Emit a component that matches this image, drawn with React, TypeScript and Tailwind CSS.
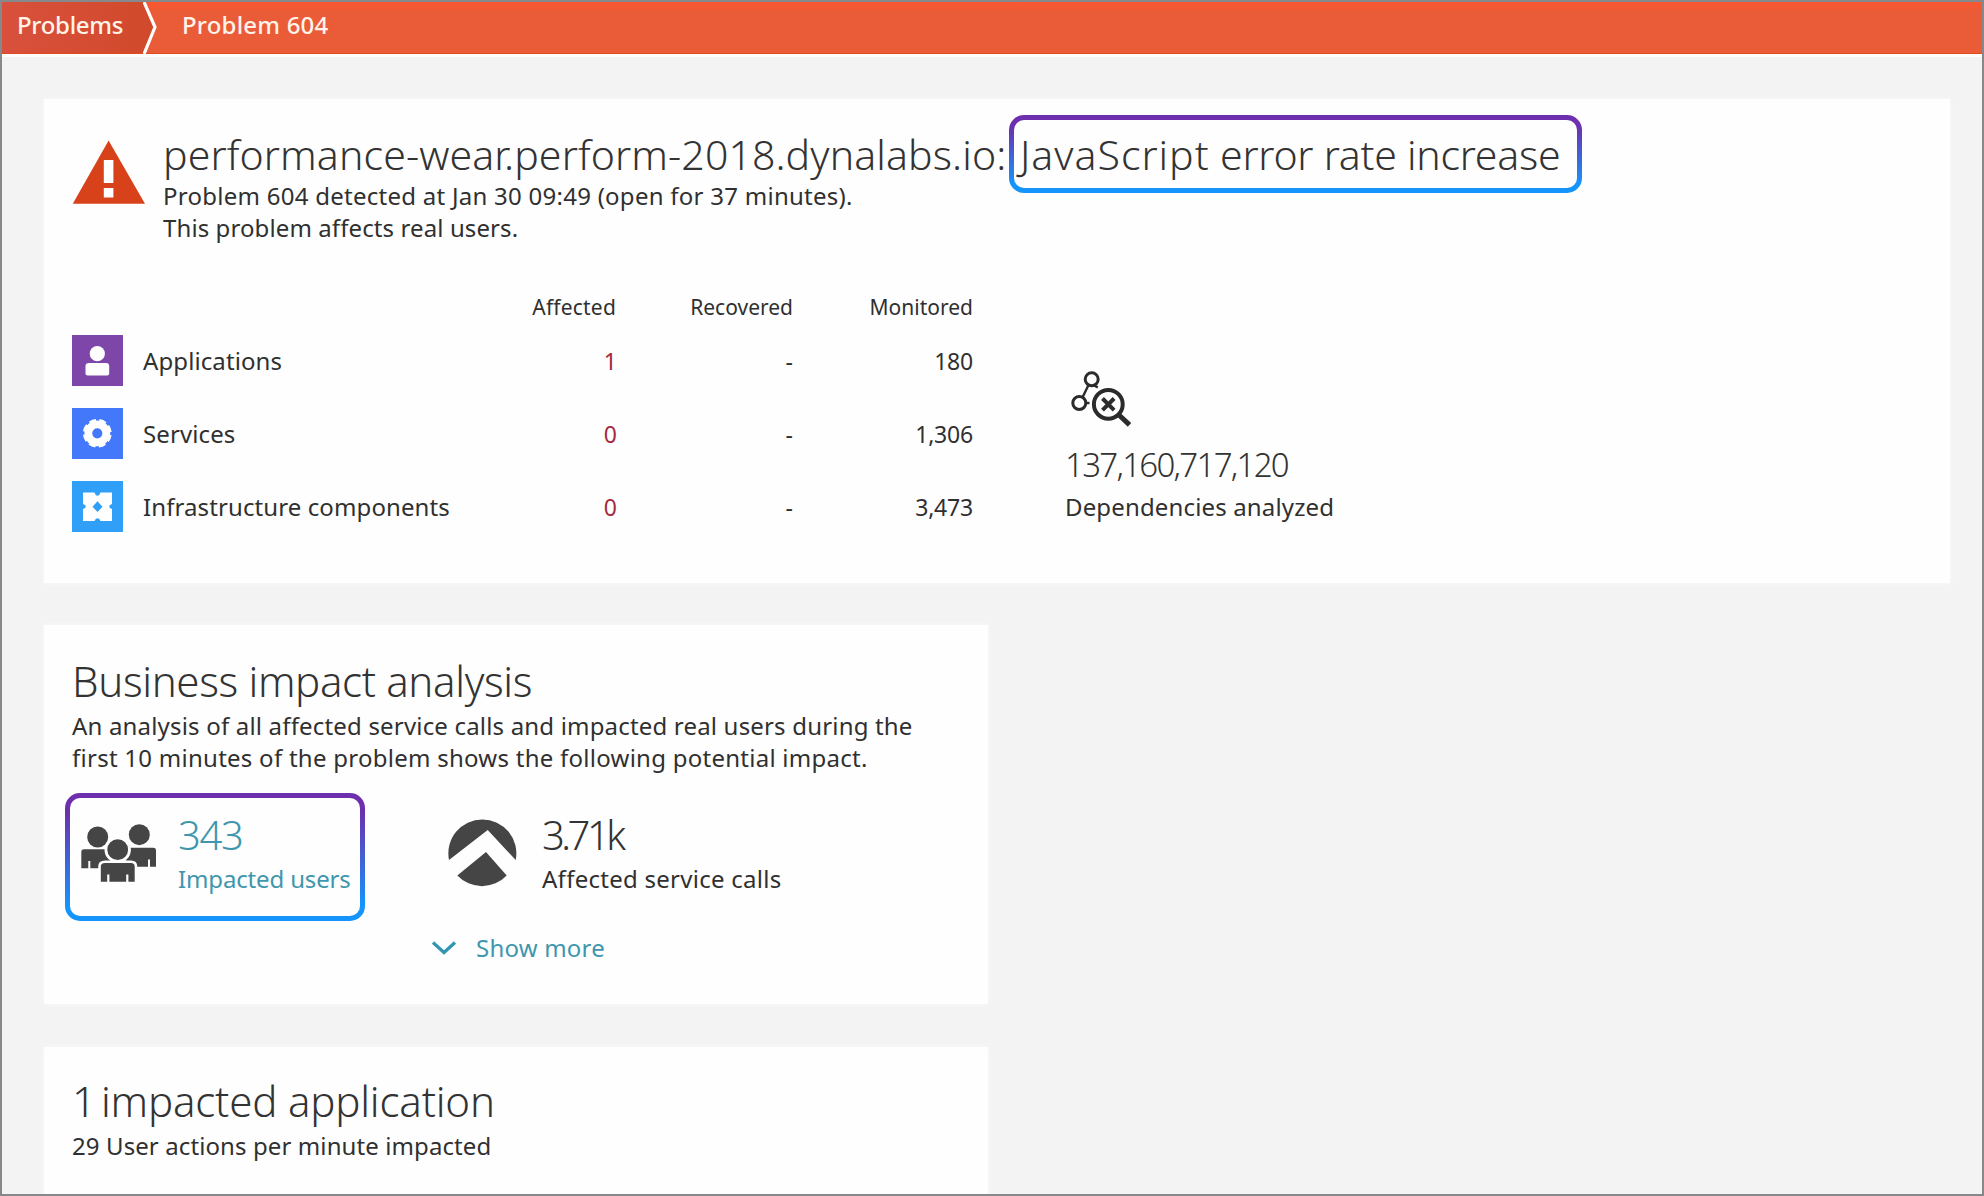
import type { ReactNode } from "react";

function WarningIcon() {
  return (
    <svg width="75" height="65" viewBox="0 0 75 65" className="mt-[41px] shrink-0">
      <path d="M36.6 0.5 73 63.8H0.8Z" fill="#d8421b" />
      <path d="M31.8 20h9.600v23h-9.600zM31.800 48h9.600v9.400h-9.600z" fill="#fff" />
    </svg>
  );
}

function UserIcon() {
  return (
    <svg width="51" height="51" viewBox="0 0 51 51" fill="#fff">
      <circle cx="25.300" cy="18.700" r="7.600" />
      <path d="M17 28h17q3.200 0 3.200 3.200v7.300q0 2-2 2H15.500q-2 0-2-2v-7.300q0-3.200 3.500-3.200Z" />
    </svg>
  );
}

function GearIcon() {
  return (
    <svg width="51" height="51" viewBox="0 0 51 51">
      <circle cx="25.300" cy="25.300" r="9" fill="none" stroke="#fff" strokeWidth="7.800" />
      <circle cx="25.300" cy="25.300" r="12.600" fill="none" stroke="#fff" strokeWidth="3.600" strokeDasharray="6.600 3.296" strokeDashoffset="-1.650" />
    </svg>
  );
}

function NodesIcon() {
  return (
    <svg width="51" height="51" viewBox="0 0 51 51" fill="#fff">
      <path d="M11 11.500h11.500l1.500 3h3l1.500-3H40V23l-2.500 1.300v2.400L40 28v12H28.500L27 37.500h-3L22.500 40H11V28l2.500-1.300v-2.400L11 23Z" />
      <path d="M25.500 20.300 30.500 25.700l-5 5.400-5-5.400Z" fill="#2f9ff8" />
    </svg>
  );
}

function DependencyIcon() {
  return (
    <svg width="64" height="60" viewBox="0 0 64 60" fill="none" stroke="#2b2b2b" className="ml-[5px]">
      <circle cx="21.700" cy="9.300" r="6.500" strokeWidth="3" />
      <circle cx="9.300" cy="33" r="6.500" strokeWidth="3" />
      <path d="M18.300 15.400 12.700 27M24 15.500l3.800 1.800M15.500 33h4" strokeWidth="2.400" />
      <circle cx="38.300" cy="34.300" r="14.400" strokeWidth="4" />
      <path d="m32.500 28.500 11.600 11.600M44.100 28.500 32.500 40.100" strokeWidth="4" />
      <path d="m49 45 10.500 9.800" strokeWidth="5" />
    </svg>
  );
}

function PeopleIcon() {
  return (
    <svg width="78" height="62" viewBox="0 0 78 62" fill="#454545" className="mt-[25px] ml-[10px] shrink-0">
      <circle cx="17.700" cy="14" r="10.500" />
      <circle cx="59.300" cy="11.700" r="10.500" />
      <path d="M4 26.300h21l6 9v10H1.300V29q0-2.700 2.700-2.700Z" />
      <path d="M50 24.700h23.300q2.700 0 2.700 2.700v16.300H46V33Z" />
      <path d="M9.300 38v8M69 36.500v8" stroke="#fff" strokeWidth="2" />
      <circle cx="37.700" cy="26.700" r="11.800" stroke="#fff" strokeWidth="2.800" />
      <path d="M25 38.800h26q5 0 5 5V60H19.500V43.800q0-5 5.500-5Z" stroke="#fff" strokeWidth="2.600" />
      <path d="M28.300 51.500V60M47.300 51.500V60M18 60h40" stroke="#fff" strokeWidth="2.200" />
    </svg>
  );
}

function ServiceCallsIcon() {
  return (
    <svg width="74" height="74" viewBox="0 0 74 74" fill="#454545" className="shrink-0">
      <path d="M3 43A34 34 0 1 1 69.700 43L41.700 13Z" />
      <path d="M40 35 60.700 58.500A34 34 0 0 1 11.300 58.500Z" />
    </svg>
  );
}

const gradientBorder =
  "border-[5px] border-transparent rounded-[15px] [background:linear-gradient(#fefefe,#fefefe)_padding-box,linear-gradient(to_bottom,#6d2fae_0%,#6d2fae_14%,#1594fc_88%)_border-box]";

function Row({ icon, color, label, affected, monitored }: { icon: ReactNode; color: string; label: string; affected: string; monitored: string }) {
  return (
    <div className="grid h-[51px] grid-cols-[545px_176px_180px] items-center text-right text-[23px]">
      <div className="flex items-center justify-between">
        <div className="flex items-center gap-5 text-2xl tracking-[0.100px]">
          <div className={`h-[51px] w-[51px] ${color}`}>{icon}</div>
          <span>{label}</span>
        </div>
        <span className="text-[#a52a3c]">{affected}</span>
      </div>
      <span>-</span>
      <span className="tracking-[-0.200px]">{monitored}</span>
    </div>
  );
}

export default function App() {
  return (
    <div className="flex h-[1196px] w-[1984px] flex-col overflow-hidden border-2 border-[#85898b] bg-[#f3f3f3] font-['Noto_Sans',sans-serif] text-2xl leading-8 text-[#303030]">
      <header className="flex h-[52px] shrink-0 border-b border-[#e04a20] bg-linear-to-b from-[#fb5630] via-[#ea5b37] via-20% to-[#ea5b37] font-medium text-[#fff3ea]">
        <div className="flex h-[51px] w-[141px] items-center bg-linear-to-r from-[#d9503c] to-[#d24a2c] pb-[6px] pl-[15px] tracking-[-0.300px]">Problems</div>
        <svg width="14" height="52" viewBox="0 0 14 52">
          <path d="M0 0 11 25 0 52Z" fill="#d24a2c" />
          <path d="M1 0 12 25 1 52" fill="none" stroke="#fff" strokeWidth="3.200" />
        </svg>
        <div className="flex h-[51px] items-center pb-[6px] pl-[25px] tracking-[0.200px]">Problem 604</div>
      </header>
      <div className="h-[3px] shrink-0 bg-white/80" />

      <main className="mt-[42px] flex flex-col pl-[42px]">
        <section className="h-[484px] w-[1906px] bg-[#fefefe] pl-[28px] shadow-[0_0_4px_#fafafa]">
          <div className="flex gap-4">
            <WarningIcon />
            <div className="pt-[31px]">
              <h1 className="flex text-[41px] leading-[48px] font-light whitespace-nowrap text-[#333]">
                <span className="w-[857px] tracking-[0.120px]">performance-wear.perform-2018.dynalabs.io:</span>
                <span className="relative">
                  <span className={`absolute top-[-15px] left-[-11px] h-[78px] w-[573px] ${gradientBorder}`} />
                  <span className="relative tracking-[-0.250px]">
                    <span className="tracking-[1px]">JavaScript</span> error rate increase
                  </span>
                </span>
              </h1>
              <p className="mt-[2px] tracking-[0.260px]">Problem 604 detected at Jan 30 09:49 (open for 37 minutes).</p>
              <p className="tracking-[0.100px]">This problem affects real users.</p>
            </div>
          </div>

          <div className="mt-[47px] flex">
            <div className="w-[993px]">
              <div className="grid grid-cols-[544px_177px_180px] text-right text-[21px]">
                <span className="tracking-[0.200px]">Affected</span>
                <span>Recovered</span>
                <span>Monitored</span>
              </div>
              <div className="mt-3 flex flex-col gap-[22px]">
                <Row icon={<UserIcon />} color="bg-[#7f46a9]" label="Applications" affected="1" monitored="180" />
                <Row icon={<GearIcon />} color="bg-[#4478fb]" label="Services" affected="0" monitored="1,306" />
                <Row icon={<NodesIcon />} color="bg-[#2f9ff8]" label="Infrastructure components" affected="0" monitored="3,473" />
              </div>
            </div>
            <div className="pt-[79px]">
              <DependencyIcon />
              <div className="mt-[15px] text-[33px] leading-10 font-light tracking-[-1.700px] text-[#333]">137,160,717,120</div>
              <div className="mt-[6px] tracking-[0.150px]">Dependencies analyzed</div>
            </div>
          </div>
        </section>

        <section className="mt-[42px] h-[379px] w-[944px] bg-[#fefefe] pt-[32px] pl-[21px] shadow-[0_0_4px_#fafafa]">
          <div className="pl-[7px]">
            <h2 className="text-[42px] leading-[48px] font-light tracking-[-0.350px] text-[#333]">Business impact analysis</h2>
            <div className="mt-[5px] whitespace-nowrap">
              <p className="tracking-[0.180px]">An analysis of all affected service calls and impacted real users during the</p>
              <p className="tracking-[0.260px]">first 10 minutes of the problem shows the following potential impact.</p>
            </div>
          </div>
          <div className="mt-[19px] flex">
            <div className={`flex h-[128px] w-[300px] whitespace-nowrap text-[#4097ad] ${gradientBorder}`}>
              <PeopleIcon />
              <div className="pt-[13px] pl-[20px]">
                <div className="text-[40px] leading-[48px] font-light tracking-[-1.400px]">343</div>
                <div className="mt-1 tracking-[-0.150px]">Impacted users</div>
              </div>
            </div>
            <div className="flex pt-[18px] pl-[81px]">
              <div className="pt-[6px]"><ServiceCallsIcon /></div>
              <div className="pl-[22px]">
                <div className="text-[40px] leading-[48px] font-light tracking-[-3.500px] text-[#333]">3.71k</div>
                <div className="mt-1 tracking-[0.270px]">Affected service calls</div>
              </div>
            </div>
          </div>
          <div className="mt-[11px] flex items-center gap-[18px] pl-[365px] text-[#4097ad]">
            <svg width="28" height="16" viewBox="0 0 28 16">
              <path d="m3 2.500 11 10 11-10" fill="none" stroke="#3295b2" strokeWidth="3.200" />
            </svg>
            <span className="tracking-[0.200px]">Show more</span>
          </div>
        </section>

        <section className="mt-[43px] h-[160px] w-[944px] bg-[#fefefe] pt-[30px] pl-[28px] shadow-[0_0_4px_#fafafa]">
          <h2 className="text-[42px] leading-[48px] font-light tracking-[-0.170px] text-[#333]">
            <span className="tracking-[-3px]">1 </span>impacted application
          </h2>
          <p className="mt-[5px] tracking-[0.100px]">29 User actions per minute impacted</p>
        </section>
      </main>
    </div>
  );
}
